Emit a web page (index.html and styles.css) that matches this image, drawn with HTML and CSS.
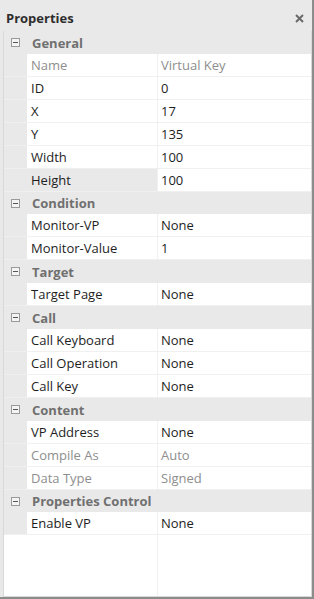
FILE: index.html
```html
<!DOCTYPE html>
<html lang="en">
<head>
    <meta charset="UTF-8">
    <title>Properties</title>
    <link rel="stylesheet" href="styles.css">
</head>
<body>
    <div class="panel">
        <div class="titlebar">
            <span class="title">Properties</span>
            <svg class="close" width="9" height="9" viewBox="0 0 9 9">
                <path d="M1 1 L8 8 M8 1 L1 8" stroke="#6a6a6a" stroke-width="2" fill="none"/>
            </svg>
        </div>
        <div class="grid">
            <div class="group-head"><span class="toggle"></span>General</div>
            <div class="row"><div class="gutter"></div><div class="name dim">Name</div><div class="value dim">Virtual Key</div></div>
            <div class="row"><div class="gutter"></div><div class="name">ID</div><div class="value">0</div></div>
            <div class="row"><div class="gutter"></div><div class="name">X</div><div class="value">17</div></div>
            <div class="row"><div class="gutter"></div><div class="name">Y</div><div class="value">135</div></div>
            <div class="row"><div class="gutter"></div><div class="name">Width</div><div class="value">100</div></div>
            <div class="row"><div class="gutter"></div><div class="name sel">Height</div><div class="value">100</div></div>

            <div class="group-head short"><span class="toggle"></span>Condition</div>
            <div class="row"><div class="gutter"></div><div class="name">Monitor-VP</div><div class="value">None</div></div>
            <div class="row"><div class="gutter"></div><div class="name">Monitor-Value</div><div class="value">1</div></div>

            <div class="group-head"><span class="toggle"></span>Target</div>
            <div class="row"><div class="gutter"></div><div class="name">Target Page</div><div class="value">None</div></div>

            <div class="group-head"><span class="toggle"></span>Call</div>
            <div class="row"><div class="gutter"></div><div class="name">Call Keyboard</div><div class="value">None</div></div>
            <div class="row"><div class="gutter"></div><div class="name">Call Operation</div><div class="value">None</div></div>
            <div class="row"><div class="gutter"></div><div class="name">Call Key</div><div class="value">None</div></div>

            <div class="group-head"><span class="toggle"></span>Content</div>
            <div class="row"><div class="gutter"></div><div class="name">VP Address</div><div class="value">None</div></div>
            <div class="row"><div class="gutter"></div><div class="name dim">Compile As</div><div class="value dim">Auto</div></div>
            <div class="row"><div class="gutter"></div><div class="name dim">Data Type</div><div class="value dim">Signed</div></div>

            <div class="group-head short"><span class="toggle"></span>Properties Control</div>
            <div class="row"><div class="gutter"></div><div class="name">Enable VP</div><div class="value">None</div></div>

            <div class="filler"></div>
        </div>
    </div>
</body>
</html>
```

FILE: styles.css
```css
* {
    box-sizing: border-box;
}
body {
    margin: 0;
    font-family: "Open Sans", "Noto Sans", sans-serif;
    font-size: 13px;
    color: #1e1e1e;
}
.panel {
    width: 314px;
    height: 599px;
    background-color: #e9e9e9;
    border-right: 2px solid #8c8c8c;
    border-bottom: 2px solid #8c8c8c;
    display: flex;
    flex-direction: column;
}
.titlebar {
    height: 31px;
    flex: none;
    display: flex;
    align-items: center;
    justify-content: space-between;
    padding: 5px 8px 0 6px;
}
.title {
    font-weight: bold;
    color: #2e2e2e;
}
.grid {
    flex: 1;
    display: flex;
    flex-direction: column;
    margin-left: 3px;
    border-left: 1px solid #d8d8d8;
    border-right: 1px solid #d8d8d8;
    border-bottom: 1px solid #d8d8d8;
    background-color: #ffffff;
}
.group-head {
    height: 23px;
    display: flex;
    align-items: center;
    background-color: #e9e9e9;
    font-weight: bold;
    color: #707070;
    padding-left: 7px;
}
.group-head.short {
    height: 22px;
}
.toggle {
    width: 9px;
    height: 9px;
    border: 1px solid #9a9a9a;
    background-color: #f4f4f4;
    margin-right: 12px;
    position: relative;
}
.toggle::after {
    content: "";
    position: absolute;
    left: 1px;
    right: 1px;
    top: 3px;
    height: 1px;
    background-color: #555555;
}
.row {
    height: 23px;
    display: flex;
    border-bottom: 1px solid #f0f0f0;
}
.gutter {
    width: 23px;
    background-color: #e9e9e9;
}
.name {
    width: 130px;
    padding-left: 4px;
    display: flex;
    align-items: center;
    white-space: nowrap;
}
.name.sel {
    background-color: #e9e9e9;
}
.value {
    flex: 1;
    padding-left: 3px;
    border-left: 1px solid #f0f0f0;
    display: flex;
    align-items: center;
}
.dim {
    color: #8e8e8e;
}
.filler {
    flex: 1;
    background: linear-gradient(to right, transparent 153px, #f0f0f0 153px, #f0f0f0 154px, transparent 154px);
}
```
